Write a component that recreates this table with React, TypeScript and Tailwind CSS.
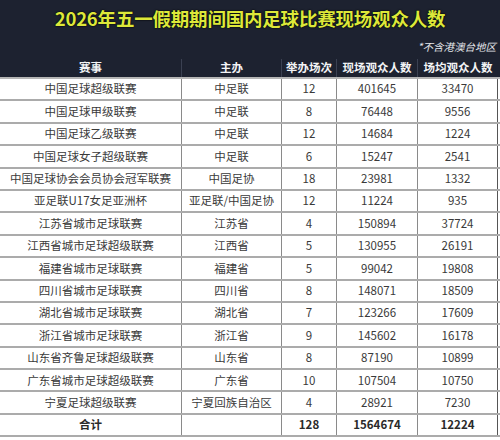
import React from "react";

const rows: [string, string, string, string, string][] = [
  ["中国足球超级联赛", "中足联", "12", "401645", "33470"],
  ["中国足球甲级联赛", "中足联", "8", "76448", "9556"],
  ["中国足球乙级联赛", "中足联", "12", "14684", "1224"],
  ["中国足球女子超级联赛", "中足联", "6", "15247", "2541"],
  ["中国足球协会会员协会冠军联赛", "中国足协", "18", "23981", "1332"],
  ["亚足联U17女足亚洲杯", "亚足联/中国足协", "12", "11224", "935"],
  ["江苏省城市足球联赛", "江苏省", "4", "150894", "37724"],
  ["江西省城市足球超级联赛", "江西省", "5", "130955", "26191"],
  ["福建省城市足球联赛", "福建省", "5", "99042", "19808"],
  ["四川省城市足球联赛", "四川省", "8", "148071", "18509"],
  ["湖北省城市足球联赛", "湖北省", "7", "123266", "17609"],
  ["浙江省城市足球联赛", "浙江省", "9", "145602", "16178"],
  ["山东省齐鲁足球超级联赛", "山东省", "8", "87190", "10899"],
  ["广东省城市足球超级联赛", "广东省", "10", "107504", "10750"],
  ["宁夏足球超级联赛", "宁夏回族自治区", "4", "28921", "7230"],
];

const grid = "grid grid-cols-[182px_100px_55px_81px_80px]";

export default function App() {
  return (
    <div className="w-[500px] h-[440px] overflow-hidden bg-white font-['Noto_Sans_CJK_SC','Noto_Sans',sans-serif]">
      <div className="bg-[#1d2230] flex flex-col">
        <div className="h-[36px] flex items-center justify-center pt-[1px]">
          <span className="text-[18.5px] font-bold text-[#dde83a] leading-none tracking-[-0.2px] [text-shadow:0_0_2px_#000,0_0_1px_#000]">
            2026年五一假期期间国内足球比赛现场观众人数
          </span>
        </div>
        <div className="h-[23px] flex items-center justify-end pr-[4px]">
          <span className="text-[10.5px] italic text-[#e5e7eb] leading-none">*不含港澳台地区</span>
        </div>
        <div className={`${grid} h-[18px] text-[11.5px] font-bold text-[#f3f4f6] leading-none`}>
          {["赛事", "主办", "举办场次", "现场观众人数", "场均观众人数"].map((h, i) => (
            <div
              key={h}
              className={`flex items-center justify-center ${i < 4 ? "border-r border-[#3b4152]" : ""}`}
            >
              {h}
            </div>
          ))}
        </div>
      </div>
      <div className="w-[500px] border-t-2 border-[#b5b5b5]">
        {rows.map((r) => (
          <div key={r[0]} className={`${grid} h-[22.4px] border-b-2 border-[#ababab] text-[11.5px] text-[#3a3a3a] leading-none`}>
            {r.map((c, i) => (
              <div
                key={i}
                className={`flex items-center justify-center border-r-[1.5px] ${i === 4 ? "border-[#555]" : "border-[#8a8a8a]"}`}
              >
                {c}
              </div>
            ))}
          </div>
        ))}
        <div className={`${grid} h-[22.4px] border-b-2 border-[#ababab] text-[11.5px] font-bold text-[#2a2a2a] leading-none`}>
          {["合计", "", "128", "1564674", "12224"].map((c, i) => (
            <div
              key={i}
              className={`flex items-center justify-center border-r-[1.5px] ${i === 4 ? "border-[#555]" : "border-[#8a8a8a]"}`}
            >
              {c}
            </div>
          ))}
        </div>
      </div>
    </div>
  );
}
